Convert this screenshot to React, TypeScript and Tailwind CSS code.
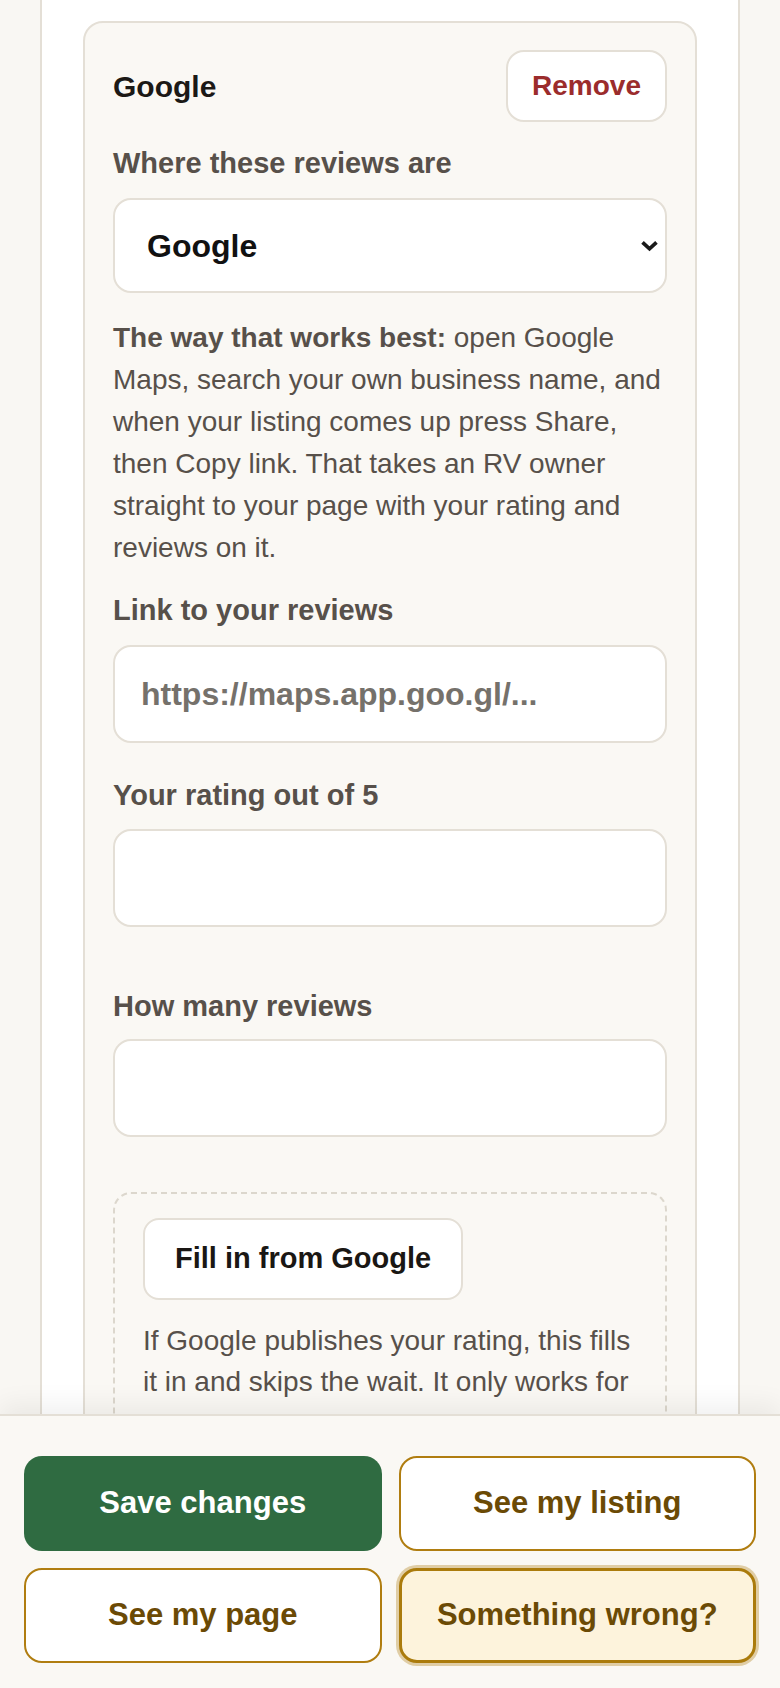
import { useState } from 'react';

const font = { fontFamily: '"Liberation Sans", Arial, Helvetica, sans-serif' };

function Label({ children, className = 'mb-[15px]' }: { children: React.ReactNode; className?: string }) {
    return (
        <label className={`block text-[29px] leading-[40px] font-bold text-[#57504a] ${className}`}>
            {children}
        </label>
    );
}

function TextField({ placeholder }: { placeholder?: string }) {
    const [value, setValue] = useState('');
    return (
        <input
            value={value}
            onChange={(e) => setValue(e.target.value)}
            placeholder={placeholder}
            className="block w-full h-[98px] px-[26px] bg-white border-2 border-[#e4dfd6] rounded-[18px] text-[32px] font-bold text-[#1c1916] placeholder:text-[#75716b] outline-none"
        />
    );
}

export default function App() {
    const [source, setSource] = useState('google');

    return (
        <div style={font} className="w-[780px] h-[1688px] flex flex-col bg-[#f9f7f3] overflow-hidden">
            {/* scrolling area */}
            <div className="flex-1 min-h-0 overflow-hidden">
                <div className="ml-[40px] w-[700px] min-h-full bg-white border-x-2 border-[#e4dfd6] px-[41px] pt-[21px]">
                    <div className="rounded-[20px] border-2 border-[#e4dfd6] bg-[#faf8f4] px-[28px] pt-[27px] pb-[40px]">
                        <div className="flex items-center justify-between">
                            <h3 className="text-[30px] font-bold text-[#1c1916]">Google</h3>
                            <button
                                type="button"
                                className="h-[72px] px-[24px] bg-white border-2 border-[#e4dfd6] rounded-[18px] text-[28px] font-bold text-[#9b2c2c]"
                            >
                                Remove
                            </button>
                        </div>

                        <div className="mt-[21px]">
                            <Label>Where these reviews are</Label>
                            <div className="relative">
                                <select
                                    value={source}
                                    onChange={(e) => setSource(e.target.value)}
                                    className="block w-full h-[95px] pl-[32px] pr-[48px] appearance-none bg-white border-2 border-[#e4dfd6] rounded-[18px] text-[32px] font-bold text-[#111] outline-none"
                                >
                                    <option value="google">Google</option>
                                    <option value="facebook">Facebook</option>
                                    <option value="yelp">Yelp</option>
                                    <option value="other">Other</option>
                                </select>
                                <svg
                                    viewBox="0 0 20 14"
                                    className="pointer-events-none absolute right-[8px] top-1/2 -translate-y-1/2 w-[19px] h-[13px]"
                                >
                                    <path d="M2.5 3 L10 10 L17.5 3" fill="none" stroke="#1a1a1a" strokeWidth="4" />
                                </svg>
                            </div>
                        </div>

                        <p className="mt-[24px] text-[28px] leading-[42px] text-[#57504a]">
                            <strong className="font-bold">The way that works best:</strong> open Google
                            Maps, search your own business name, and when your listing comes up press Share,
                            then Copy link. That takes an RV owner straight to your page with your rating and
                            reviews on it.
                        </p>

                        <div className="mt-[21px]">
                            <Label>Link to your reviews</Label>
                            <TextField placeholder="https://maps.app.goo.gl/..." />
                        </div>

                        <div className="mt-[32px]">
                            <Label className="mb-[14px]">Your rating out of 5</Label>
                            <TextField />
                        </div>

                        <div className="mt-[59px]">
                            <Label className="mb-[13px]">How many reviews</Label>
                            <TextField />
                        </div>

                        <div className="mt-[55px] rounded-[18px] border-2 border-dashed border-[#dcd7cd] px-[28px] pt-[24px] pb-[28px]">
                            <button
                                type="button"
                                className="h-[82px] px-[30px] bg-white border-2 border-[#e4dfd6] rounded-[16px] text-[29px] font-bold text-[#1a1714]"
                            >
                                Fill in from Google
                            </button>
                            <p className="mt-[20px] text-[28px] leading-[41px] text-[#57504a]">
                                If Google publishes your rating, this fills it in and skips the wait. It only works for
                            </p>
                        </div>
                    </div>
                </div>
            </div>

            {/* action bar */}
            <div className="shrink-0 border-t-2 border-[#e4dfd6] bg-[#faf8f4] shadow-[0_-10px_24px_rgba(0,0,0,0.06)] px-[24px] pt-[40px] pb-[25px] grid grid-cols-2 gap-[17px]">
                <button
                    type="button"
                    className="h-[95px] rounded-[18px] bg-[#2f6b41] text-[31px] font-bold text-white"
                >
                    Save changes
                </button>
                <button
                    type="button"
                    className="h-[95px] rounded-[18px] bg-white border-2 border-[#b07d10] text-[31px] font-bold text-[#6b4a05]"
                >
                    See my listing
                </button>
                <button
                    type="button"
                    className="h-[95px] rounded-[18px] bg-white border-2 border-[#b07d10] text-[31px] font-bold text-[#6b4a05]"
                >
                    See my page
                </button>
                <button
                    type="button"
                    className="h-[95px] rounded-[18px] bg-[#fdf3dc] border-[3px] border-[#ab7b0c] shadow-[0_0_0_3px_rgba(176,125,16,0.35)] text-[31px] font-bold text-[#6b4a05]"
                >
                    Something wrong?
                </button>
            </div>
        </div>
    );
}
